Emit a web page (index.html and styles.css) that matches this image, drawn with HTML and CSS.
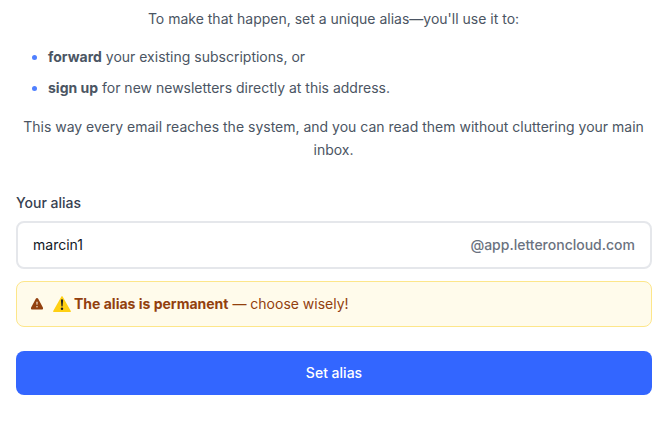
FILE: index.html
```html
<!DOCTYPE html>
<html lang="en">
<head>
  <meta charset="UTF-8">
  <meta name="viewport" content="width=device-width, initial-scale=1.0">
  <title>Set your alias</title>
  <link rel="stylesheet" href="styles.css">
</head>
<body>
  <main class="setup">
    <div class="intro">
      <p>To make that happen, set a unique alias—you'll use it to:</p>
      <ul>
        <li><strong>forward</strong> your existing subscriptions, or</li>
        <li><strong>sign up</strong> for new newsletters directly at this address.</li>
      </ul>
      <p>This way every email reaches the system, and you can read them without cluttering your main inbox.</p>
    </div>

    <form class="alias-form">
      <label for="alias">Your alias</label>
      <div class="alias-field">
        <input type="text" id="alias" name="alias" value="marcin1" required>
        <span class="domain">@app.letteroncloud.com</span>
      </div>

      <div class="notice">
        <svg class="notice-icon" viewBox="0 0 12 12" aria-hidden="true">
          <path fill="#92400e" fill-rule="evenodd" d="M4.8.7a1.4 1.4 0 0 1 2.4 0l4.7 8.8a1.4 1.4 0 0 1-1.2 2.1H1.3A1.4 1.4 0 0 1 .1 9.500zM5.400 3.700l.2 3.100h.8l.2-3.100zM6 8a.7.7 0 1 0 0 1.400A.7.7 0 0 0 6 8z"/>
        </svg>
        <svg class="notice-emoji" viewBox="0 0 18 16" aria-hidden="true">
          <path fill="#ffd013" d="M8.4.5a.7.7 0 0 1 1.2 0l8.200 14.400a.6.6 0 0 1-.5 1H.7a.6.6 0 0 1-.5-1z"/>
          <path fill="#222" d="M7.900 4.400a1.100 1.100 0 0 1 2.200 0l-.5 5.600a.6.6 0 0 1-1.200 0z"/>
          <circle cx="9" cy="12.800" r="1.200" fill="#222"/>
        </svg>
        <p><strong>The alias is permanent</strong> — choose wisely!</p>
      </div>

      <button type="submit">Set alias</button>
    </form>
  </main>
</body>
</html>
```
FILE: styles.css
```css
* {
  box-sizing: border-box;
}
body {
  margin: 0;
  background: #fff;
  color: #4b5563;
  font-family: Inter, "Liberation Sans", sans-serif;
  font-size: 14px;
  line-height: 23px;
}
p {
  margin: 0;
}
.setup {
  padding: 7px 15px 32px;
}
.intro {
  text-align: center;
}
ul {
  display: grid;
  gap: 8px;
  margin: 15px 0 16px;
  padding-left: 33px;
  text-align: left;
}
li::marker {
  color: #5080ff;
}
.alias-form {
  margin: 31px 0 0 1px;
  line-height: 22px;
}
.alias-form label {
  display: block;
  margin-bottom: 7px;
  color: #374151;
  font-weight: 500;
}
.alias-field {
  display: flex;
  align-items: center;
  height: 48px;
  padding: 0 15px;
  border: 2px solid #e5e7eb;
  border-radius: 8px;
}
.alias-field input {
  flex: 1;
  min-width: 0;
  height: 22px;
  padding: 0;
  border: 0;
  outline: none;
  background: transparent;
  color: #111827;
  font: inherit;
}
.domain {
  color: #6b7280;
  font-weight: 500;
}
.notice {
  display: flex;
  align-items: center;
  margin: 12px 0 24px;
  padding: 11px 14px;
  border: 1px solid #fde68a;
  border-radius: 8px;
  background: #fffbeb;
  color: #92400e;
}
.notice-icon {
  width: 12px;
  height: 12px;
  margin-right: 10px;
}
.notice-emoji {
  width: 18px;
  height: 16px;
  margin-right: 3px;
}
.alias-form button {
  width: 100%;
  height: 44px;
  border: none;
  border-radius: 8px;
  background: #3366ff;
  color: #fff;
  font: inherit;
  font-weight: 500;
  cursor: pointer;
}
```
